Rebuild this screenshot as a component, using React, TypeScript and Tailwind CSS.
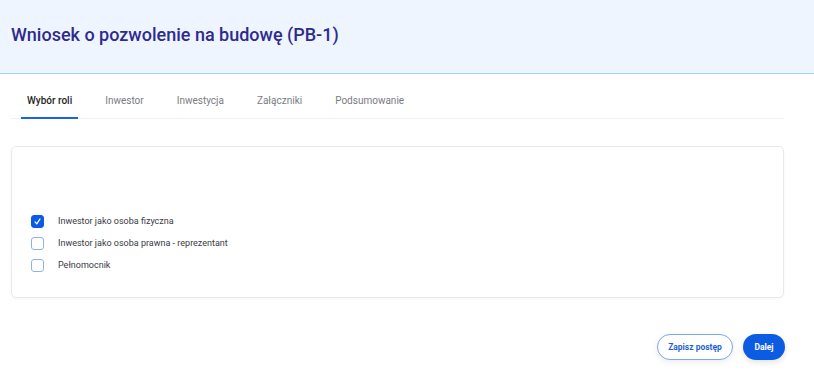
import React, { useState } from 'react';

const tabs = ['Wybór roli', 'Inwestor', 'Inwestycja', 'Załączniki', 'Podsumowanie'];

const roles = [
    'Inwestor jako osoba fizyczna',
    'Inwestor jako osoba prawna - reprezentant',
    'Pełnomocnik',
];

const Check = ({ checked }: { checked: boolean }) => (
    <span
        className={
            'flex h-[13px] w-[13px] items-center justify-center rounded-[3px] border ' +
            (checked ? 'border-[#0b5ce3] bg-[#0b5ce3]' : 'border-[#8fb2ef] bg-white')
        }
    >
        {checked && (
            <svg width="9" height="9" viewBox="0 0 10 10" fill="none">
                <path d="M2.3 5.4 L4.2 7.6 L7.8 2.2" stroke="white" strokeWidth="1.4" strokeLinecap="round" strokeLinejoin="round" />
            </svg>
        )}
    </span>
);

export default function App() {
    const [role, setRole] = useState(0);

    return (
        <div className="min-h-[372px] bg-white font-['Roboto',sans-serif]">
            {/* Header */}
            <div className="flex h-[74px] items-center border-b border-[#9fd1f7] bg-[#eef5fe] px-[11px]">
                <h1 className="mt-[-4px] text-[18px] font-medium text-[#2e2b8e]">Wniosek o pozwolenie na budowę (PB-1)</h1>
            </div>

            <div className="ml-[11px] w-[773px]">
                {/* Tabs */}
                <div className="flex gap-[21px] border-b border-[#f1f1f3] pl-[10px] pt-[19px]">
                    {tabs.map((t, i) => (
                        <div
                            key={t}
                            className={
                                'mb-[-1px] border-b-2 px-[6px] pb-[8px] text-[10px] leading-[16px] ' +
                                (i === 0 ? 'border-[#1565e6] font-medium text-[#1e1e24]' : 'border-transparent text-[#7b7b82]')
                            }
                        >
                            {t}
                        </div>
                    ))}
                </div>

                {/* Role card */}
                <div className="mt-[27px] flex h-[152px] flex-col gap-[9px] rounded-[5px] border border-[#e6e8ec] px-[19px] pt-[68px] shadow-[0_1px_3px_rgba(0,0,0,0.04)]">
                    {roles.map((r, i) => (
                        <label key={r} className="flex cursor-pointer items-center" onClick={() => setRole(i)}>
                            <Check checked={role === i} />
                            <span className="ml-[14px] text-[9px] leading-[13px] text-[#3a3a44]">{r}</span>
                        </label>
                    ))}
                </div>

                {/* Actions */}
                <div className="mt-[36px] flex justify-end gap-[10px]">
                    <button className="h-[26px] w-[76px] rounded-full border border-[#7ba7ee] bg-white text-[8.5px] font-bold text-[#1f5fd6] shadow-[0_2px_6px_rgba(0,0,0,0.08)]">
                        Zapisz postęp
                    </button>
                    <button className="mr-[-1px] h-[26px] w-[42px] rounded-full bg-[#0b5ce3] text-[8.5px] font-bold text-white shadow-[0_2px_6px_rgba(0,0,0,0.12)]">
                        Dalej
                    </button>
                </div>
            </div>
        </div>
    );
}
